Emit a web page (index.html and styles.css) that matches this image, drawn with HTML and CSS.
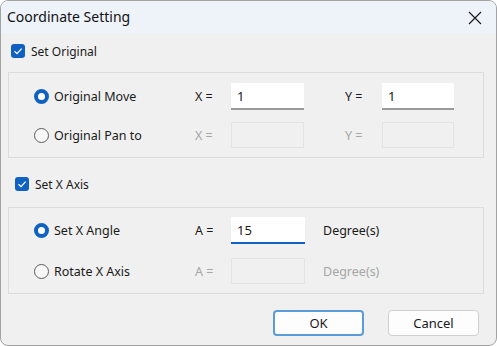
FILE: index.html
```html
<!DOCTYPE html>
<html lang="en">
<head>
    <meta charset="UTF-8">
    <title>Coordinate Setting</title>
    <link rel="stylesheet" href="styles.css">
</head>
<body>
    <div class="dialog">
        <div class="titlebar">
            <span class="title">Coordinate Setting</span>
            <svg class="close" viewBox="0 0 14 14" width="14" height="14">
                <path d="M1 1 L13 13 M13 1 L1 13" stroke="#1b1b1b" stroke-width="1.2" fill="none"/>
            </svg>
        </div>

        <div class="content">
            <div class="check-row">
                <span class="checkbox">
                    <svg viewBox="0 0 14 14" width="14" height="14"><path d="M3.5 7.2 L6 9.6 L10.6 4.6" stroke="#fff" stroke-width="1.3" fill="none"/></svg>
                </span>
                Set Original
            </div>

            <div class="group group-origin">
                <div class="option"><span class="radio on"></span>Original Move</div>
                <div class="field-label">X =</div>
                <div class="input">1</div>
                <div></div>
                <div class="field-label">Y =</div>
                <div class="input">1</div>

                <div class="option"><span class="radio"></span>Original Pan to</div>
                <div class="field-label disabled">X =</div>
                <div class="input disabled"></div>
                <div></div>
                <div class="field-label disabled">Y =</div>
                <div class="input disabled"></div>
            </div>

            <div class="check-row second">
                <span class="checkbox">
                    <svg viewBox="0 0 14 14" width="14" height="14"><path d="M3.5 7.2 L6 9.6 L10.6 4.6" stroke="#fff" stroke-width="1.3" fill="none"/></svg>
                </span>
                Set X Axis
            </div>

            <div class="group group-axis">
                <div class="option"><span class="radio on"></span>Set X Angle</div>
                <div class="field-label">A =</div>
                <div class="input focused">15</div>
                <div class="unit">Degree(s)</div>

                <div class="option"><span class="radio"></span>Rotate X Axis</div>
                <div class="field-label disabled">A =</div>
                <div class="input disabled"></div>
                <div class="unit disabled">Degree(s)</div>
            </div>
        </div>

        <div class="buttons">
            <button class="btn default">OK</button>
            <button class="btn">Cancel</button>
        </div>
    </div>
</body>
</html>
```

FILE: styles.css
```css
body {
    margin: 0;
    padding: 0;
    background: #ffffff;
    font-family: 'Noto Sans', 'Open Sans', sans-serif;
    font-size: 12px;
    color: #1a1a1a;
}

.dialog {
    box-sizing: border-box;
    width: 497px;
    height: 346px;
    border: 1px solid #a3a3a3;
    border-radius: 8px;
    background: #f0f0f0;
    overflow: hidden;
}

.titlebar {
    height: 32px;
    background: #eef3fa;
    display: flex;
    align-items: center;
    justify-content: space-between;
    padding: 0 14px 0 6px;
}

.title {
    font-size: 14px;
    color: #111;
    margin-top: -1px;
}

.close {
    display: block;
    margin-top: 1px;
}

.content {
    padding: 0 12px 0 7px;
}

.check-row {
    display: flex;
    align-items: center;
    gap: 6px;
    height: 14px;
    padding-left: 3px;
    margin: 11px 0 14px;
}

.check-row.second {
    padding-left: 7px;
    margin: 19px 0 16px;
}

.checkbox {
    width: 14px;
    height: 14px;
    border-radius: 3px;
    background: #0f62c1;
    display: flex;
}

.group {
    border: 1px solid #dcdcdc;
    display: grid;
    align-items: center;
    padding-left: 25px;
}

.group-origin {
    grid-template-columns: 161px 36px 73px 41px 37px 72px;
    grid-template-rows: 27px 26px;
    row-gap: 12px;
    padding-top: 10px;
    padding-bottom: 9px;
}

.group-axis {
    grid-template-columns: 161px 36px 74px auto;
    grid-template-rows: 27px 26px;
    row-gap: 14px;
    padding-top: 9px;
    padding-bottom: 9px;
}

.option {
    display: flex;
    align-items: center;
    gap: 5px;
    font-size: 12.5px;
}

.radio {
    box-sizing: border-box;
    width: 15px;
    height: 15px;
    border-radius: 50%;
    border: 1px solid #5c5c5c;
    background: #f7f7f7;
}

.radio.on {
    border: 4px solid #0f62c1;
    background: #ffffff;
}

.field-label {
    font-size: 12.5px;
}

.unit {
    margin-left: 18px;
    font-size: 12.5px;
}

.disabled {
    color: #a6a6a6;
}

.input {
    box-sizing: border-box;
    height: 100%;
    background: #ffffff;
    border-bottom: 2px solid #9a9a9a;
    padding: 2px 0 0 6px;
    font-size: 13px;
    line-height: 22px;
}

.input.focused {
    border-bottom-color: #0f62c1;
}

.input.disabled {
    background: #f0f0f0;
    border: 1px solid #e3e3e3;
}

.buttons {
    display: flex;
    justify-content: flex-end;
    gap: 24px;
    padding: 16px 17px 0 0;
}

.btn {
    box-sizing: border-box;
    width: 91px;
    height: 26px;
    background: #fdfdfd;
    border: 1px solid #d0d0d0;
    border-radius: 4px;
    font-family: 'Noto Sans', 'Open Sans', sans-serif;
    font-size: 13px;
    color: #1a1a1a;
    padding: 0;
}

.btn.default {
    border: 2px solid #5b9bd8;
}
```
